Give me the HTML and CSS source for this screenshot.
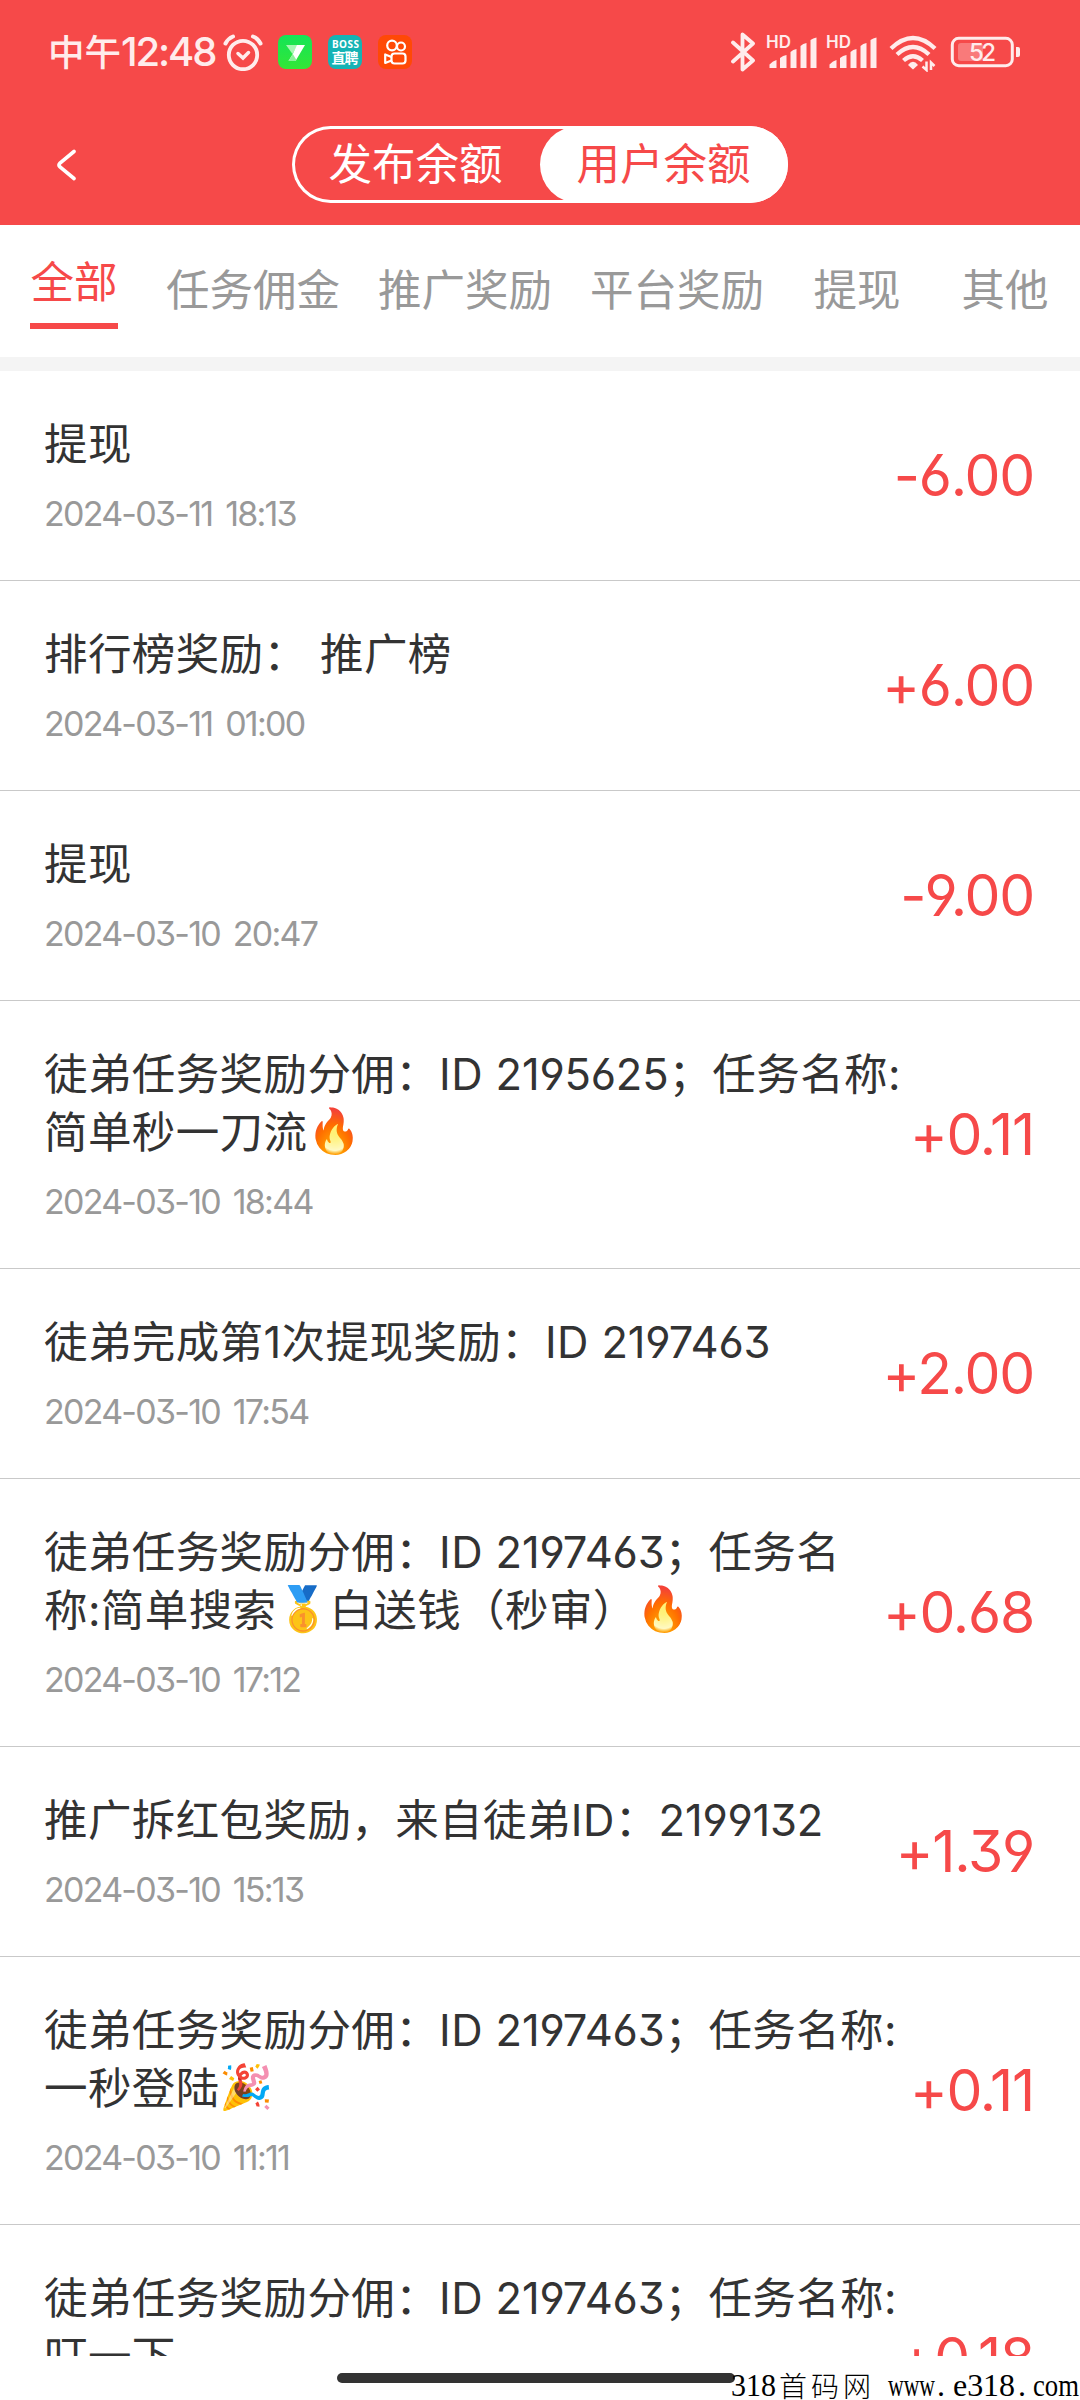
FILE: index.html
```html
<!DOCTYPE html>
<html lang="zh-CN">
<head>
<meta charset="utf-8">
<title>用户余额</title>
<link rel="stylesheet" href="styles.css">
</head>
<body>
<div class="screen">
  <header class="header">
    <div class="status">
      <div class="clock">中午<span class="clock-num">12:48</span></div>
      <svg class="alarm" width="40" height="38" viewBox="0 0 40 38" fill="none" stroke="#ffecec" stroke-linecap="round">
        <circle cx="20" cy="22" r="14.2" stroke-width="3.8"/>
        <path d="M2.5 10.5Q5 5.5 10 3.5M30 3.5Q35 5.5 37.500 10.500" stroke-width="4"/>
        <path d="M15 20.500L20 25L25.500 19.500" stroke-width="3.500"/>
      </svg>
      <svg class="app" width="34" height="34" viewBox="0 0 34 34">
        <defs><linearGradient id="g" x2="0" y2="1"><stop stop-color="#14e458"/><stop offset="1" stop-color="#33e736"/></linearGradient></defs>
        <rect width="34" height="34" rx="8" fill="url(#g)"/>
        <path d="M8 10H20L14.500 19Z" fill="#a9f6b5"/>
        <path d="M19 10H27L17.500 26H10.500L14.800 19Z" fill="#fff"/>
        <path d="M14.800 19L18.500 25L17.500 26H10.500Z" fill="#8df09a"/>
      </svg>
      <svg class="app" width="34" height="34" viewBox="0 0 34 34">
        <rect width="34" height="34" rx="8" fill="#15b3b4"/>
        <text class="boss" x="4" y="13" textLength="27">BOSS</text>
        <text class="boss-cn" x="3.500" y="27.500" textLength="27">直聘</text>
      </svg>
      <svg class="app" width="34" height="34" viewBox="0 0 34 34" fill="none" stroke="#fff" stroke-width="2.200">
        <rect width="34" height="34" rx="8" fill="#ff4906" stroke="none"/>
        <circle cx="14" cy="10.500" r="4.800"/><circle cx="23" cy="11.500" r="4"/>
        <rect x="13.500" y="18.500" width="14" height="10" rx="3"/>
        <path d="M13.500 22L7.200 19.500V28L13.500 25.500" stroke-linejoin="round"/>
      </svg>
      <svg class="signals" width="300" height="40" viewBox="726 32 300 40" fill="#ffecec">
        <path d="M733 42.500L753 60.500L742.500 69.500V34.500L753 43.500L733 61.500" fill="none" stroke="#ffecec" stroke-width="3.800" stroke-linecap="round" stroke-linejoin="round"/>
        <g id="sim">
          <text class="hd" x="766" y="48" textLength="25">HD</text>
          <path d="M769.500 68V64.500Q773 60.500 776.500 60V68ZM780 68V58Q783 55.500 786.500 55V68ZM790.500 68V52Q793 49.500 796.500 49V68ZM800.500 68V46Q803 43.500 806.500 43V68ZM810.500 68V40Q813 38 816.500 37.500V68Z"/>
        </g>
        <use href="#sim" x="60"/>
        <g fill="none" stroke="#ffecec" stroke-width="4.300">
          <path d="M891 48.500Q913 27.500 935 48.500M897 54.500Q913 39.500 929 54.500M903.500 60.500Q913 52 922.500 60.500"/>
        </g>
        <path d="M908 65Q913 58.500 918 65L913 69.500Z"/>
        <path d="M926.500 61.500V70L922.500 66.500M931 70V62.500L934.500 66" fill="none" stroke="#ffecec" stroke-width="2.500"/>
        <rect x="952.300" y="38.300" width="60" height="27.400" rx="6.500" fill="none" stroke="#ffecec" stroke-width="3"/>
        <rect x="958" y="43" width="25" height="18" rx="3" fill="#f97a7a"/>
        <path d="M1016 47H1018Q1020 47 1020 49V55Q1020 57 1018 57H1016Z"/>
        <text class="battery" x="969" y="61" textLength="27">52</text>
      </svg>
    </div>
    <div class="nav">
      <svg class="back" width="22" height="34" viewBox="0 0 22 34"><path d="M18 3.500L4 15Q2 17 4 19L18 30.500" fill="none" stroke="#fff" stroke-width="3.600" stroke-linecap="round"/></svg>
      <div class="segment"><span class="seg">发布余额</span><span class="seg seg-on">用户余额</span></div>
    </div>
  </header>
  <nav class="tabs">
    <span class="tab tab-on">全部</span><span class="tab">任务佣金</span><span class="tab">推广奖励</span><span class="tab">平台奖励</span><span class="tab">提现</span><span class="tab">其他</span>
  </nav>
  <main class="list">
    <div class="row"><div class="info"><div class="title">提现</div><div class="date">2024-03-11 18:13</div></div><div class="amount">-6.00</div></div>
    <div class="row"><div class="info"><div class="title">排行榜奖励： 推广榜</div><div class="date">2024-03-11 01:00</div></div><div class="amount">+6.00</div></div>
    <div class="row"><div class="info"><div class="title">提现</div><div class="date">2024-03-10 20:47</div></div><div class="amount">-9.00</div></div>
    <div class="row"><div class="info"><div class="title">徒弟任务奖励分佣：ID <span class="id">2195625</span>；任务名称:<br>简单秒一刀流<span class="emoji">🔥</span></div><div class="date">2024-03-10 18:44</div></div><div class="amount">+0.11</div></div>
    <div class="row"><div class="info"><div class="title">徒弟完成第1次提现奖励：ID <span class="id">2197463</span></div><div class="date">2024-03-10 17:54</div></div><div class="amount">+2.00</div></div>
    <div class="row"><div class="info"><div class="title">徒弟任务奖励分佣：ID <span class="id">2197463</span>；任务名<br>称:简单搜索<span class="emoji">🥇</span>白送钱（秒审）<span class="emoji">🔥</span></div><div class="date">2024-03-10 17:12</div></div><div class="amount">+0.68</div></div>
    <div class="row"><div class="info"><div class="title">推广拆红包奖励，来自徒弟ID：<span class="id">2199132</span></div><div class="date">2024-03-10 15:13</div></div><div class="amount">+1.39</div></div>
    <div class="row"><div class="info"><div class="title">徒弟任务奖励分佣：ID <span class="id">2197463</span>；任务名称:<br>一秒登陆<span class="emoji">🎉</span></div><div class="date">2024-03-10 11:11</div></div><div class="amount">+0.11</div></div>
    <div class="row"><div class="info"><div class="title">徒弟任务奖励分佣：ID <span class="id">2197463</span>；任务名称:<br>叮一下</div><div class="date">2024-03-10 11:02</div></div><div class="amount">+0.18</div></div>
  </main>
  <footer class="gesture"><div class="handle"></div></footer>
  <svg class="watermark" width="352" height="34" viewBox="0 0 352 34">
    <text x="2" y="28" textLength="45" lengthAdjust="spacingAndGlyphs">318</text>
    <text class="mark-cn" x="50" y="29" textLength="92">首码网</text>
    <text x="159" y="28" textLength="47" lengthAdjust="spacingAndGlyphs">www</text>
    <text x="208" y="28">.</text>
    <text x="224" y="28" textLength="62">e318</text>
    <text x="289" y="28">.</text>
    <text x="304" y="28" textLength="46" lengthAdjust="spacingAndGlyphs">com</text>
  </svg>
</div>
</body>
</html>
```
FILE: styles.css
```css
* { box-sizing: border-box; }
body { margin: 0; font-family: Inter, "Noto Sans CJK SC", sans-serif; font-feature-settings: "cv03", "cv04", "cv09"; }
.screen { position: relative; display: flex; flex-direction: column; width: 1080px; height: 2400px; overflow: hidden; background: #fff; }
.header { height: 225px; flex: none; background: #f64949; }
.status { display: flex; align-items: center; height: 104px; padding: 0 54px 0 48px; }
.clock { width: 175px; font-size: 36.5px; line-height: 44px; font-weight: 500; color: #ffecec; white-space: nowrap; }
.clock-num { font-size: 40px; letter-spacing: -2.1px; }
.alarm { flex: none; margin-right: 15px; }
.app { flex: none; margin-right: 16px; }
.boss { font: 700 10px "Noto Sans", sans-serif; fill: #fff; }
.boss-cn { font: 700 14px "Noto Sans CJK SC", sans-serif; fill: #fff; }
.signals { flex: none; margin-left: auto; }
.hd { font: 600 17px Inter, sans-serif; }
.battery { font: 500 24px Inter, sans-serif; }
.nav { display: flex; align-items: center; height: 121px; padding: 0 0 0 56px; }
.back { margin-right: 214px; }
.segment { display: grid; grid-template-columns: 1fr 1fr; width: 496px; height: 77px; border-radius: 39px; box-shadow: inset 0 0 0 3px #fff; }
.seg { display: flex; align-items: center; justify-content: center; color: #fff; font-size: 43.5px; line-height: 58px; padding: 0 1px 1px 0; }
.seg-on { background: #fff; color: #f64949; border-radius: 39px; }
.tabs { flex: none; display: grid; grid-template-columns: 148px 212px 212px 212px 148px 148px; justify-items: center; height: 146px; border-bottom: 14px solid #f4f4f4; font-size: 43.5px; line-height: 59px; color: #999; padding-top: 36px; }
.tab { height: 60px; padding-right: 2px; }
.tab-on { width: 88px; margin-top: -8px; padding: 0; height: 76px; color: #f64949; border-bottom: 6px solid #f64949; text-align: center; }
.list { flex: none; height: 1985px; overflow: hidden; }
.row { display: flex; align-items: center; justify-content: space-between; padding: 44px 46px 43px 44px; border-bottom: 1px solid #c9c9c9; }
.info { white-space: nowrap; }
.title { font-size: 43.5px; line-height: 58px; letter-spacing: 0.4px; color: #333; }
.id { letter-spacing: -0.2px; }
.date { margin-top: 17px; font-size: 34px; line-height: 47px; letter-spacing: -1.75px; word-spacing: 5px; color: #999; }
.amount { padding-bottom: 1px; font-size: 57px; line-height: 60px; letter-spacing: -1.2px; color: #f64949; white-space: nowrap; }
.emoji { display: inline-block; width: 53px; height: 58px; vertical-align: top; font-family: "Noto Color Emoji", sans-serif; }
.gesture { display: flex; height: 44px; padding: 17px 0 0 337px; }
.handle { width: 398px; height: 10px; border-radius: 5px; background: #333; }
.watermark { position: absolute; left: 729px; top: 2368px; font: 32px "Liberation Serif", serif; }
.mark-cn { font: 300 28px "Noto Sans CJK SC", sans-serif; }
```
